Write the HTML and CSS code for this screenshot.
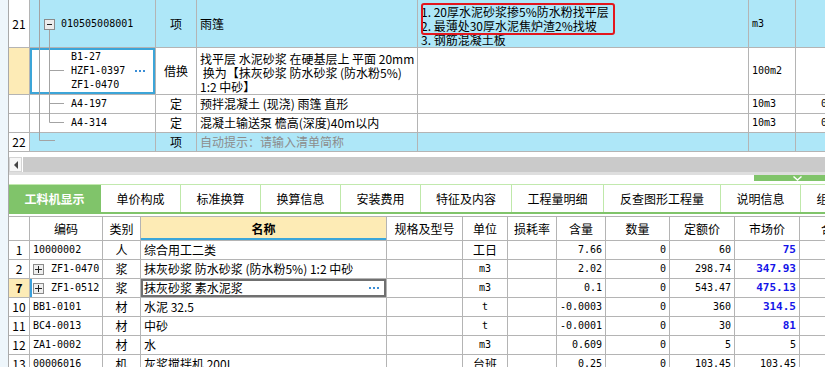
FILE: index.html
```html
<!DOCTYPE html>
<html lang="zh-CN">
<head>
    <meta charset="UTF-8">
    <title>分部分项 - 工料机显示</title>
    <link rel="stylesheet" href="styles.css">
</head>
<body>
    <div class="app">
        <div class="bill">
            <table class="grid bill-table">
                <colgroup>
                    <col class="b-num"><col class="b-code"><col class="b-type"><col class="b-name"><col class="b-desc"><col class="b-unit"><col class="b-more">
                </colgroup>
                <tr class="tall item">
                    <td class="num">21</td>
                    <td class="code-top mono">010505008001</td>
                    <td class="center">项</td>
                    <td>雨篷</td>
                    <td class="desc">1. 20厚水泥砂浆掺5%防水粉找平层<br>2. 最薄处30厚水泥焦炉渣2%找坡<br>3. 钢筋混凝土板</td>
                    <td class="mono">m3</td>
                    <td></td>
                </tr>
                <tr class="tall">
                    <td class="num current"></td>
                    <td class="code-sub editing">
                        <div class="code-edit">
                            <div class="mono">B1-27<br>HZF1-0397<br>ZF1-0470</div>
                            <span class="more"></span>
                        </div>
                    </td>
                    <td class="center">借换</td>
                    <td class="multi">找平层 水泥砂浆 在硬基层上 平面 20mm<br>&nbsp;换为【抹灰砂浆 防水砂浆 (防水粉5%)<br>1:2 中砂】</td>
                    <td></td>
                    <td class="mono">100m2</td>
                    <td></td>
                </tr>
                <tr>
                    <td class="num"></td>
                    <td class="code-sub mono">A4-197</td>
                    <td class="center">定</td>
                    <td>预拌混凝土 (现浇) 雨篷 直形</td>
                    <td></td>
                    <td class="mono">10m3</td>
                    <td class="peek mono">0</td>
                </tr>
                <tr>
                    <td class="num"></td>
                    <td class="code-sub mono">A4-314</td>
                    <td class="center">定</td>
                    <td>混凝土输送泵 檐高(深度)40m以内</td>
                    <td></td>
                    <td class="mono">10m3</td>
                    <td class="peek mono">0</td>
                </tr>
                <tr class="item">
                    <td class="num">22</td>
                    <td></td>
                    <td class="center">项</td>
                    <td class="hint">自动提示：请输入清单简称</td>
                    <td></td>
                    <td></td>
                    <td></td>
                </tr>
            </table>
            <svg class="tree" width="60" height="151" viewBox="0 0 60 151">
                <g stroke="#a3a3a3" stroke-width="1" fill="none">
                    <line x1="30.5" y1="0" x2="30.5" y2="140.5"/>
                    <line x1="30.5" y1="140.5" x2="46" y2="140.5"/>
                    <line x1="40.5" y1="30" x2="40.5" y2="122.5"/>
                    <line x1="40.5" y1="70.5" x2="55" y2="70.5"/>
                    <line x1="40.5" y1="103.5" x2="55" y2="103.5"/>
                    <line x1="40.5" y1="122.5" x2="55" y2="122.5"/>
                </g>
                <rect x="35.5" y="19.5" width="10" height="10" fill="#ececec" stroke="#8a8a8a"/>
                <line x1="38" y1="24.5" x2="43" y2="24.5" stroke="#222"/>
            </svg>
            <div class="mark"></div>
        </div>

        <div class="hscroll">
            <span class="hscroll-btn"><i></i></span>
            <span class="hscroll-track"></span>
        </div>

        <div class="splitter">
            <span class="fold">
                <svg width="9" height="5" viewBox="0 0 9 5"><polyline points="0.5,0.5 4.5,4 8.5,0.5" fill="none" stroke="#fff" stroke-width="1.4"/></svg>
            </span>
        </div>

        <ul class="tabs">
            <li class="active w92">工料机显示</li>
            <li class="w80">单价构成</li>
            <li class="w80">标准换算</li>
            <li class="w80">换算信息</li>
            <li class="w80">安装费用</li>
            <li class="w91">特征及内容</li>
            <li class="w92">工程量明细</li>
            <li class="w117">反查图形工程量</li>
            <li class="w80">说明信息</li>
            <li class="w80">组价方案</li>
        </ul>

        <table class="grid res-table">
            <colgroup>
                <col class="r-num"><col class="r-code"><col class="r-type"><col class="r-name"><col class="r-spec"><col class="r-unit"><col class="r-loss"><col class="r-qty"><col class="r-cnt"><col class="r-price"><col class="r-market"><col class="r-total">
            </colgroup>
            <tr class="head">
                <th></th>
                <th>编码</th>
                <th>类别</th>
                <th class="sorted">名称</th>
                <th>规格及型号</th>
                <th>单位</th>
                <th>损耗率</th>
                <th>含量</th>
                <th>数量</th>
                <th>定额价</th>
                <th>市场价</th>
                <th>合价</th>
            </tr>
            <tr>
                <td class="num">1</td>
                <td class="mono">10000002</td>
                <td class="center">人</td>
                <td>综合用工二类</td>
                <td></td>
                <td class="center">工日</td>
                <td></td>
                <td class="n">7.66</td>
                <td class="n">0</td>
                <td class="n">60</td>
                <td class="n blue">75</td>
                <td></td>
            </tr>
            <tr>
                <td class="num">2</td>
                <td class="mono"><span class="expand"></span>ZF1-0470</td>
                <td class="center">浆</td>
                <td>抹灰砂浆 防水砂浆 (防水粉5%) 1:2 中砂</td>
                <td></td>
                <td class="center mono">m3</td>
                <td></td>
                <td class="n">2.02</td>
                <td class="n">0</td>
                <td class="n">298.74</td>
                <td class="n blue">347.93</td>
                <td></td>
            </tr>
            <tr>
                <td class="num current">7</td>
                <td class="mono row-mark"><span class="expand"></span>ZF1-0512</td>
                <td class="center">浆</td>
                <td class="editing-cell"><div class="name-edit">抹灰砂浆 素水泥浆<span class="more"></span></div></td>
                <td></td>
                <td class="center mono">m3</td>
                <td></td>
                <td class="n">0.1</td>
                <td class="n">0</td>
                <td class="n">543.47</td>
                <td class="n blue">475.13</td>
                <td></td>
            </tr>
            <tr>
                <td class="num">10</td>
                <td class="mono">BB1-0101</td>
                <td class="center">材</td>
                <td>水泥 32.5</td>
                <td></td>
                <td class="center mono">t</td>
                <td></td>
                <td class="n">-0.0003</td>
                <td class="n">0</td>
                <td class="n">360</td>
                <td class="n blue">314.5</td>
                <td></td>
            </tr>
            <tr>
                <td class="num">11</td>
                <td class="mono">BC4-0013</td>
                <td class="center">材</td>
                <td>中砂</td>
                <td></td>
                <td class="center mono">t</td>
                <td></td>
                <td class="n">-0.0001</td>
                <td class="n">0</td>
                <td class="n">30</td>
                <td class="n blue">81</td>
                <td></td>
            </tr>
            <tr>
                <td class="num">12</td>
                <td class="mono">ZA1-0002</td>
                <td class="center">材</td>
                <td>水</td>
                <td></td>
                <td class="center mono">m3</td>
                <td></td>
                <td class="n">0.609</td>
                <td class="n">0</td>
                <td class="n">5</td>
                <td class="n">5</td>
                <td></td>
            </tr>
            <tr>
                <td class="num">13</td>
                <td class="mono">00006016</td>
                <td class="center">机</td>
                <td>灰浆搅拌机 200L</td>
                <td></td>
                <td class="center">台班</td>
                <td></td>
                <td class="n">0.25</td>
                <td class="n">0</td>
                <td class="n">103.45</td>
                <td class="n">103.45</td>
                <td></td>
            </tr>
        </table>
    </div>
</body>
</html>
```

FILE: styles.css
```css
body {
    margin: 0;
    background-color: #eef6fb;
    font-family: "Noto Sans CJK SC", sans-serif;
    font-size: 12px;
    color: #000;
    overflow: hidden;
}
.app {
    margin-left: 8px;
    width: 816px;
    height: 367px;
    border-left: 1px solid #a9a9a9;
    background-color: #fff;
    overflow: hidden;
}

/* grids */
.grid {
    border-collapse: separate;
    border-spacing: 0;
    table-layout: fixed;
}
.grid td,
.grid th {
    box-sizing: border-box;
    height: 19px;
    padding: 0 3px;
    border-right: 1px solid #b4b4b4;
    border-bottom: 1px solid #b4b4b4;
    line-height: 14px;
    white-space: nowrap;
    overflow: hidden;
    text-align: left;
    font-weight: normal;
    vertical-align: middle;
}
.grid .num {
    padding: 0;
    text-align: center;
    background-color: #fff;
}
.grid .num.current {
    background-color: #fdebb6;
    font-weight: bold;
}
.grid .center {
    text-align: center;
}
.mono {
    font-family: "DejaVu Sans Mono", "Noto Sans CJK SC", monospace;
    font-size: 10px;
}
.more {
    display: inline-block;
    width: 10px;
    height: 2px;
    background: repeating-linear-gradient(to right, #3b8ed6 0 2px, transparent 2px 4px);
}

/* upper bill table */
.bill {
    position: relative;
    height: 151px;
}
.bill-table {
    width: 847px;
}
.b-num { width: 21px; }
.b-code { width: 126px; }
.b-type { width: 41px; }
.b-name { width: 221px; }
.b-desc { width: 331px; }
.b-unit { width: 47px; }
.b-more { width: 60px; }
.bill-table .tall td {
    height: 47px;
}
.bill-table .item td {
    background-color: #aee7f8;
}
.bill-table .item td.num {
    background-color: #fff;
}
.bill-table .code-top {
    padding-left: 31px;
}
.bill-table .code-sub {
    padding-left: 41px;
}
.bill-table .editing {
    box-shadow: inset 0 0 0 2px #3ca5d8;
}
.code-edit {
    display: flex;
    align-items: center;
    padding-right: 7px;
}
.code-edit .more {
    margin-left: auto;
}
.bill-table .desc {
    vertical-align: top;
    padding-top: 5px;
}
.bill-table .multi {
    padding-top: 4px;
}
.bill-table .peek {
    padding-left: 25px;
}
.bill-table .hint {
    color: #8c8c8c;
}
.tree {
    position: absolute;
    top: 0;
    left: 0;
    pointer-events: none;
}
.mark {
    position: absolute;
    left: 412px;
    top: 3px;
    width: 194px;
    height: 32px;
    box-sizing: border-box;
    border: 2px solid #e3161d;
    border-radius: 3px;
}

/* horizontal scrollbar */
.hscroll {
    display: flex;
    height: 15px;
    margin-top: 6px;
}
.hscroll-btn {
    box-sizing: border-box;
    width: 13px;
    display: flex;
    align-items: center;
    justify-content: center;
    background-color: #f7f7f7;
    border: 1px solid #d4d4d4;
}
.hscroll-btn i {
    width: 0;
    height: 0;
    border-right: 4px solid #444;
    border-top: 4px solid transparent;
    border-bottom: 4px solid transparent;
}
.hscroll-track {
    flex: 1;
    margin-left: 1px;
    background-color: #cacaca;
}

.splitter {
    display: flex;
    justify-content: flex-end;
    height: 9px;
    border-top: 3px solid #dedede;
}
.fold {
    width: 86px;
    height: 6px;
    margin-right: -15px;
    display: flex;
    align-items: center;
    justify-content: center;
    background-color: #80c46a;
}
.fold svg {
    display: block;
}

/* tabs */
.tabs {
    display: flex;
    margin: 0;
    padding: 0;
    list-style: none;
    height: 27px;
    border-top: 1px solid #c2e9ae;
    border-bottom: 2px solid #80c46a;
    white-space: nowrap;
}
.tabs li {
    flex: none;
    box-sizing: border-box;
    border-right: 1px solid #bfe8aa;
    text-align: center;
    line-height: 27px;
}
.tabs li.active {
    background-color: #80c46a;
    color: #fff;
    font-weight: bold;
    border-right-color: #80c46a;
}
.w80 { width: 80px; }
.w91 { width: 91px; }
.w92 { width: 92px; }
.w117 { width: 117px; }

/* lower resource table */
.res-table {
    width: 858px;
    margin-top: 2px;
}
.r-num { width: 21px; }
.r-code { width: 73px; }
.r-type { width: 38px; }
.r-name { width: 246px; }
.r-spec { width: 76px; }
.r-unit { width: 45px; }
.r-loss { width: 49px; }
.r-qty { width: 49px; }
.r-cnt { width: 64px; }
.r-price { width: 65px; }
.r-market { width: 65px; }
.r-total { width: 67px; }
.res-table .head th {
    height: 25px;
    border-top: 1px solid #b4b4b4;
    text-align: center;
    background-color: #fff;
}
.res-table .head th.sorted {
    background-color: #fdebb5;
    font-weight: bold;
    box-shadow: inset 0 -2px 0 #3aa6da;
}
.res-table .n {
    text-align: right;
    font-family: "DejaVu Sans Mono", monospace;
    font-size: 10px;
}
.res-table .blue {
    color: #1414e8;
    font-weight: bold;
    font-size: 11px;
}
.res-table .row-mark {
    box-shadow: inset 2px 0 0 #3aa0dc;
}
.res-table .editing-cell {
    box-shadow: inset 0 0 0 2px #707070;
}
.name-edit {
    display: flex;
    align-items: center;
    padding-right: 4px;
}
.name-edit .more {
    margin-left: auto;
}
.expand {
    display: inline-block;
    box-sizing: border-box;
    width: 11px;
    height: 11px;
    margin-right: 7px;
    vertical-align: middle;
    border: 1px solid #8a8a8a;
    background:
        linear-gradient(#222, #222) center / 7px 1px no-repeat,
        linear-gradient(#222, #222) center / 1px 7px no-repeat,
        #efefef;
}
```
